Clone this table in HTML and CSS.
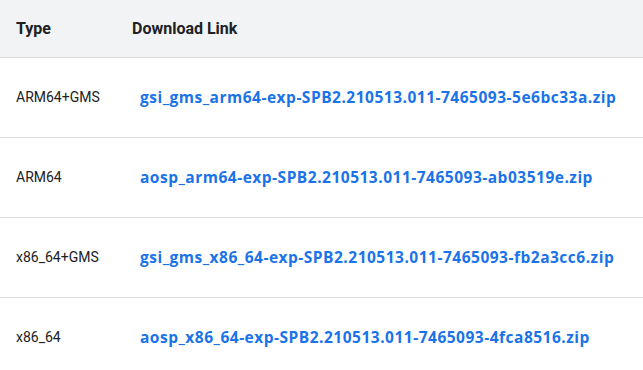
FILE: index.html
```html
<!DOCTYPE html>
<html lang="en">
<head>
  <meta charset="UTF-8">
  <title>GSI downloads</title>
  <link rel="stylesheet" href="styles.css">
</head>
<body>
  <table class="dl-table">
    <thead>
      <tr><th class="type-col">Type</th><th>Download Link</th></tr>
    </thead>
    <tbody>
      <tr>
        <td>ARM64+GMS</td>
        <td><a class="dl-link" href="#">gsi_gms_arm64-exp-SPB2.210513.011-7465093-5e6bc33a.zip</a></td>
      </tr>
      <tr>
        <td>ARM64</td>
        <td><a class="dl-link" href="#">aosp_arm64-exp-SPB2.210513.011-7465093-ab03519e.zip</a></td>
      </tr>
      <tr>
        <td>x86_64+GMS</td>
        <td><a class="dl-link" href="#">gsi_gms_x86_64-exp-SPB2.210513.011-7465093-fb2a3cc6.zip</a></td>
      </tr>
      <tr>
        <td>x86_64</td>
        <td><a class="dl-link" href="#">aosp_x86_64-exp-SPB2.210513.011-7465093-4fca8516.zip</a></td>
      </tr>
    </tbody>
  </table>
</body>
</html>
```

FILE: styles.css
```css
* { box-sizing: border-box; margin: 0; padding: 0; }
body { font-family: Roboto, "Liberation Sans", sans-serif; color: #202124; background: #fff; }
.dl-table { width: 100%; border-collapse: collapse; font-size: 14px; }
.dl-table th { background: #f1f3f4; height: 57px; text-align: left; font-size: 16px; font-weight: 700; border-bottom: 1px solid #dadce0; padding: 0 16px; vertical-align: middle; }
.dl-table th.type-col { width: 116px; }
.dl-table td { height: 80px; border-bottom: 1px solid #dadce0; padding: 0 16px; vertical-align: middle; }
.dl-link { margin-left: 8px; color: #1a73e8; text-decoration: none; font-family: "Open Sans", sans-serif; font-weight: 700; font-size: 15.5px; letter-spacing: 0.5px; }
```
